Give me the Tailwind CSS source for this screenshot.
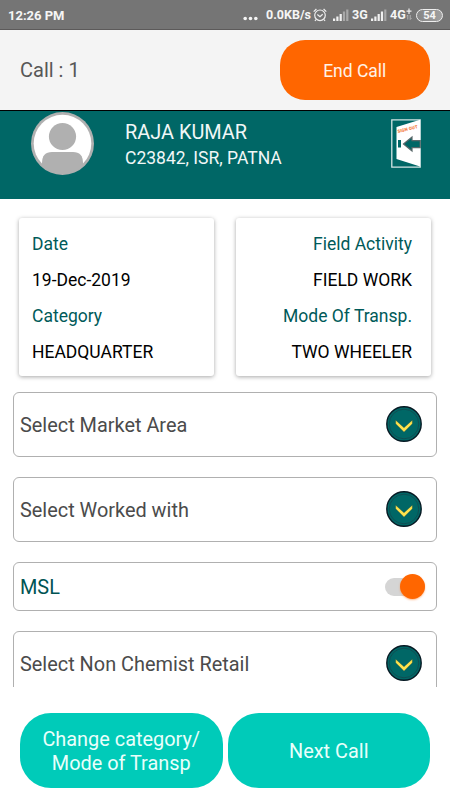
<!DOCTYPE html>
<html lang="en">
<head>
<meta charset="utf-8">
<title>Call</title>
<script src="https://cdn.jsdelivr.net/npm/@tailwindcss/browser@4"></script>
</head>
<body class="bg-white">
<div class="w-[450px] h-[800px] flex flex-col overflow-hidden bg-white font-[Roboto,sans-serif]">
  <!-- Status bar -->
  <div class="h-[30px] shrink-0 flex items-center justify-between bg-[#757575] border-b border-[#5c5a5a] pt-px pl-2 pr-[7px] text-[13px] leading-none font-bold text-[#f5f5f5]">
    <span class="text-[13px]">12:26 PM</span>
    <div class="flex items-center">
      <svg class="w-[15px] h-[5px] mr-[8px] mt-[7px]" viewBox="0 0 15 5" fill="#f5f5f5"><circle cx="2.2" cy="2.5" r="1.8"/><circle cx="7.5" cy="2.5" r="1.8"/><circle cx="12.8" cy="2.5" r="1.8"/></svg>
      <span class="w-[44px] text-[12.5px] whitespace-nowrap">0.0KB/s</span>
      <svg class="w-[14px] h-[14px] ml-[3px]" viewBox="0 0 14 14" fill="none" stroke="#eee" stroke-width="1.2"><circle cx="7" cy="7.3" r="5.3"/><path d="M.7 3.6 3.4 1M13.3 3.6 10.6 1M4.3 6.5 7 8.8 9.7 6.2M2.9 11.7 2 13M11.1 11.7 12 13"/></svg>
      <svg class="w-[16px] h-[12px] ml-[6px]" viewBox="0 0 16 12"><path fill="#f0f0f0" d="M0 9.5h2.2V12H0zM3.3 7.5h2.2V12H3.3zM6.6 5h2.2v7H6.6z"/><path fill="#a8a8a8" d="M9.9 2.5h2.2V12H9.9zM13.2.5h2.2V12h-2.2z"/></svg>
      <span class="w-[16px] ml-[3px] text-[12.5px] whitespace-nowrap">3G</span>
      <svg class="w-[16px] h-[12px] ml-[3px]" viewBox="0 0 16 12"><path fill="#f0f0f0" d="M0 9.5h2.2V12H0zM3.3 7.5h2.2V12H3.3zM6.6 5h2.2v7H6.6zM9.9 2.5h2.2V12H9.9z"/><path fill="#a8a8a8" d="M13.2.5h2.2V12h-2.2z"/></svg>
      <span class="w-[16px] ml-[3px] text-[12.5px] whitespace-nowrap">4G</span>
      <svg class="w-[6px] h-[12px] -mt-[2px]" viewBox="0 0 6 12" fill="none" stroke="#eee"><path stroke-width="1.2" d="M.5 3.2h5M3 .5v5.5"/><path stroke="#bbb" stroke-width=".9" d="M1.8 7v4.5M.5 8.3 1.8 7M4.2 7v4.5M5.5 10.2 4.2 11.5"/></svg>
      <span class="ml-[4px] w-[27px] h-[13px] rounded-full border-[1.5px] border-[#eee] bg-linear-to-r from-[#858585] to-[#a0a0a0] flex items-center justify-center text-[11px]">54</span>
    </div>
  </div>

  <!-- Call header -->
  <div class="h-[81px] shrink-0 flex items-center justify-between bg-[#f4f4f4] border-b border-black pl-5 pr-5">
    <span class="text-[20px] text-[#575757]">Call : 1</span>
    <button class="w-[150.5px] h-[60px] rounded-[25px] bg-[#ff6600] text-[17.5px] text-[#fff3e8] pt-[2px]">End Call</button>
  </div>

  <!-- Profile -->
  <div class="h-[88px] shrink-0 flex items-start bg-[#006766] pl-[31px] pr-[29px]">
    <svg class="w-[63px] h-[63px] mt-[1px]" viewBox="0 0 63 63"><defs><clipPath id="face"><circle cx="31.5" cy="31.5" r="30.5"/></clipPath></defs><circle cx="31.5" cy="31.5" r="31.5" fill="#b0b0b0"/><circle cx="31.5" cy="31.5" r="28.8" fill="#fff"/><g clip-path="url(#face)" fill="#b0b0b0"><circle cx="31.5" cy="24.5" r="13.6"/><path d="M11 63V51q0-11 10-11h21q10 0 10 11v12z"/></g></svg>
    <div class="ml-[31px] mt-[9px] flex-1 flex flex-col text-[#f1f7f7]">
      <span class="text-[19.9px] leading-[25px]">RAJA KUMAR</span>
      <span class="text-[17.5px] leading-[25px] mt-px">C23842, ISR, PATNA</span>
    </div>
    <svg class="w-[30px] h-[49px] mt-[8px]" viewBox="0 0 30 49"><path d="M.8.8h28.4v47.4H.8z" fill="none" stroke="#d4e5e5" stroke-width="1.3"/><path d="M5.5 8 29 .8v46.8L5.5 40z" fill="#fff"/><path d="M7 21h3v7.5H7z" fill="#006766"/><path d="M12.5 25 21 18v3.6h8.2v7H21V32z" fill="#006766" stroke="#59686a" stroke-width="1.2"/><text transform="translate(7 14) rotate(-14)" font-family="Roboto, sans-serif" font-size="4.4" font-weight="900" fill="#f47c3c" textLength="20.5">SIGN OUT</text></svg>
  </div>

  <!-- Scrollable form -->
  <main class="h-[488px] shrink-0 overflow-hidden pt-[19px]">
    <div class="flex gap-[22px] pl-[19px] text-[17.5px] leading-[36.2px] text-black">
      <section class="w-[195px] h-[158px] rounded-[3px] bg-white shadow-[0_1px_4px_rgba(0,0,0,0.35)] px-[13px] pt-[7.6px] flex flex-col">
        <span class="text-[#005a59]">Date</span>
        <span>19-Dec-2019</span>
        <span class="text-[#005a59]">Category</span>
        <span>HEADQUARTER</span>
      </section>
      <section class="w-[195px] h-[158px] rounded-[3px] bg-white shadow-[0_1px_4px_rgba(0,0,0,0.35)] pl-[13px] pr-[19px] pt-[7.6px] flex flex-col text-right">
        <span class="text-[#005a59]">Field Activity</span>
        <span>FIELD WORK</span>
        <span class="text-[#005a59]">Mode Of Transp.</span>
        <span>TWO WHEELER</span>
      </section>
    </div>

    <div class="mt-4 px-[12.5px] w-[450px] flex flex-col gap-5 text-[19.9px] text-[#4b4b4b]">
      <div class="w-[424px] h-[65px] rounded-[6px] border border-[#b0b0b0] pl-[6.5px] pr-[13.5px] flex items-center justify-between">
        <span class="pt-[2px]">Select Market Area</span>
        <svg class="w-[36px] h-[36px] -mt-px" viewBox="0 0 36 36"><circle cx="18" cy="18" r="17.2" fill="#006766" stroke="#071a24" stroke-width="1.4"/><circle cx="18" cy="18" r="14.8" fill="none" stroke="#124b50" stroke-width=".9"/><path d="M9.7 14.2 18 21.8 26.3 14.2v3.6L18 25.9 9.7 17.8z" fill="#ffe34d" stroke="#2f4a35" stroke-width=".3"/></svg>
      </div>
      <div class="w-[424px] h-[65px] rounded-[6px] border border-[#b0b0b0] pl-[6.5px] pr-[13.5px] flex items-center justify-between">
        <span class="pt-[2px]">Select Worked with</span>
        <svg class="w-[36px] h-[36px] -mt-px" viewBox="0 0 36 36"><circle cx="18" cy="18" r="17.2" fill="#006766" stroke="#071a24" stroke-width="1.4"/><circle cx="18" cy="18" r="14.8" fill="none" stroke="#124b50" stroke-width=".9"/><path d="M9.7 14.2 18 21.8 26.3 14.2v3.6L18 25.9 9.7 17.8z" fill="#ffe34d" stroke="#2f4a35" stroke-width=".3"/></svg>
      </div>
      <div class="w-[424px] h-[49px] rounded-[6px] border border-[#b0b0b0] pl-[6.5px] pr-[10.5px] flex items-center justify-between">
        <span class="text-[#005453] pt-[3px]">MSL</span>
        <span class="w-[40px] h-[18px] rounded-full bg-[#d5d5d5] flex items-center justify-end"><span class="w-[25px] h-[25px] rounded-full bg-[#ff6600] shadow-[0_1px_2px_rgba(255,102,0,0.45)]"></span></span>
      </div>
      <div class="w-[424px] h-[65px] rounded-[6px] border border-[#b0b0b0] pl-[6.5px] pr-[13.5px] flex items-center justify-between">
        <span class="pt-[2px]">Select Non Chemist Retail</span>
        <svg class="w-[36px] h-[36px] -mt-px" viewBox="0 0 36 36"><circle cx="18" cy="18" r="17.2" fill="#006766" stroke="#071a24" stroke-width="1.4"/><circle cx="18" cy="18" r="14.8" fill="none" stroke="#124b50" stroke-width=".9"/><path d="M9.7 14.2 18 21.8 26.3 14.2v3.6L18 25.9 9.7 17.8z" fill="#ffe34d" stroke="#2f4a35" stroke-width=".3"/></svg>
      </div>
    </div>
  </main>

  <!-- Actions -->
  <div class="flex-1 flex items-start gap-[5px] px-5 pt-[26px] text-[19.9px] leading-[23.5px] text-[#e9fffb]">
    <button class="flex-1 h-[75px] rounded-[31px] bg-[#00cbb9] pt-[2px]">Change category/<br>Mode of Transp</button>
    <button class="flex-1 h-[75px] rounded-[31px] bg-[#00cbb9] pt-[2px]">Next Call</button>
  </div>
</div>
</body>
</html>
